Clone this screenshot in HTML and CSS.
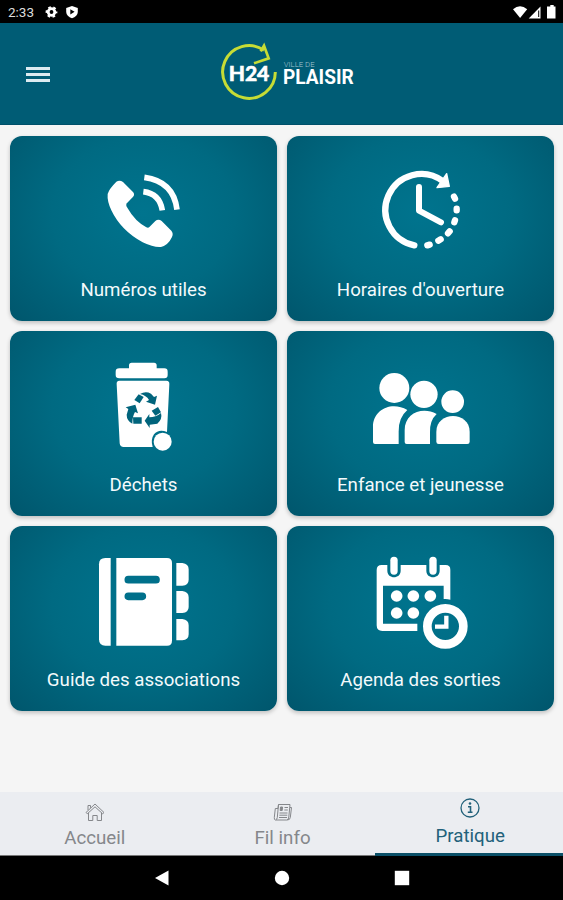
FILE: index.html
```html
<!DOCTYPE html>
<html lang="fr">
<head>
    <meta charset="UTF-8">
    <title>Ville de Plaisir</title>
    <link rel="stylesheet" href="styles.css">
</head>
<body>

    <div class="status-bar">
        <span class="clock">2:33</span>
        <svg class="status-left" width="34" height="14" viewBox="0 0 34 14" fill="#fff">
            <circle cx="6.5" cy="7" r="3.3" fill="none" stroke="#fff" stroke-width="2.8"/>
            <circle cx="6.5" cy="7" r="4.9" fill="none" stroke="#fff" stroke-width="2" stroke-dasharray="2.6 2.53" stroke-dashoffset="1.3"/>
            <path d="M27 1l5.8 2v4c0 3-2.400 5.200-5.800 6.300c-3.400-1.100-5.800-3.300-5.800-6.300V3z"/>
            <path d="M25.300 4.200v5.200l4.300-2.600z" fill="#000"/>
        </svg>
        <svg class="status-right" width="44" height="14" viewBox="0 0 44 14" fill="#fff">
            <path d="M0 4.200Q7-1.600 14.200 4.200L7.100 13z"/>
            <path d="M15.700 13.500L27.500 1.500v12z"/>
            <path d="M25.200 5.500h1v6.500h-1z" fill="#000"/>
            <path d="M35.500 1.500h1.800V0h3.400v1.500h1.800v12h-8.500v-12z"/>
        </svg>
    </div>

    <header class="header">
        <button class="menu-btn" type="button" aria-label="Menu">
            <span></span>
            <span></span>
            <span></span>
        </button>
        <svg class="logo" width="150" height="70" viewBox="0 0 450 210">
            <path d="M162 43A79 79 0 1 0 196 108" fill="none" stroke="#c6dc35" stroke-width="9"/>
            <path d="M132 82L176 67L162 29L152 46" fill="none" stroke="#c6dc35" stroke-width="8"/>
            <text class="logo-h24" x="56" y="134" textLength="122" lengthAdjust="spacingAndGlyphs">H24</text>
            <text class="logo-ville" x="221" y="93" textLength="93" lengthAdjust="spacingAndGlyphs">VILLE DE</text>
            <text class="logo-name" x="219" y="143" textLength="212" lengthAdjust="spacingAndGlyphs">PLAISIR</text>
        </svg>
    </header>

    <main class="grid">
        <a class="card">
            <svg class="card-icon" viewBox="283 91 300 300" fill="#fff">
                <path d="M350 156Q360 150 370 157L400 187Q407 195 399 203L380 222Q378 227 384 236Q406 275 440 293Q446 296 450 291L467 274Q476 266 486 274L515 303Q522 311 517 322Q506 346 484 352Q462 354 429 338Q364 303 335 242Q322 214 324 193Q328 178 350 156z"/>
                <path d="M434 143Q522 155 532 240M431 186Q480 192 488 242" fill="none" stroke="#fff" stroke-width="17"/>
            </svg>
            <span class="card-label">Numéros utiles</span>
        </a>
        <a class="card">
            <svg class="card-icon" viewBox="258 90 300 300" fill="none" stroke="#fff" stroke-linecap="round">
                <path d="M388 346A108 108 0 1 1 473 153" stroke-width="19"/>
                <path d="M485 131L493 169L456 173z" fill="#fff" stroke-width="4" stroke-linejoin="round"/>
                <path d="M402 171V242L468 277" stroke-width="18" stroke-linejoin="round"/>
                <path d="M507 200L510 206M515 236V241M510 271L508 277M494 304L489 310M467 328L460 332M434 344L427 346" stroke-width="19"/>
            </svg>
            <span class="card-label">Horaires d'ouverture</span>
        </a>
        <a class="card">
            <svg class="card-icon" viewBox="283 90 300 300" fill="#fff">
                <path d="M388 130V121Q388 113 396 113H463Q471 113 471 121V130H494Q504 130 504 140V150Q504 160 494 160H359Q348 160 348 150V140Q348 130 359 130z"/>
                <path d="M359 167H500Q510 167 509 178L502 321Q477 311 463 328Q452 344 459 366H372Q361 366 360 355L351 178Q350 167 359 167z"/>
                <circle cx="489" cy="350" r="27"/>
                <g fill="#00647c">
                    <path d="M421 207Q438 197 454 206L463 216L472 212L466 239L439 230L448 225Q440 211 421 207z"/>
                    <path d="M417 208L432 216L420 235L404 225z"/>
                    <path d="M378 247L407 239L415 265L406 261Q398 274 398 296Q381 287 381 269L386 252z"/>
                    <path d="M400 277H426V296H401z"/>
                    <path d="M435 287L449 267V277Q468 277 484 264Q489 282 473 296L450 299V309z"/>
                    <path d="M456 257L475 246L484 262L467 272z"/>
                </g>
            </svg>
            <span class="card-label">Déchets</span>
        </a>
        <a class="card">
            <svg class="card-icon" viewBox="258 90 300 300" fill="#fff">
                <circle cx="328" cy="189" r="45"/>
                <circle cx="417" cy="208" r="41"/>
                <circle cx="503" cy="230" r="34"/>
                <path d="M264 351V306C264 252 321 228 367 255Q340 278 341 320V357H270Q264 357 264 351z"/>
                <path d="M359 351V316C359 264 412 244 455 267Q434 286 435 322V357H365Q359 357 359 351z"/>
                <path d="M454 350V320C454 257 554 257 554 320V350Q554 357 547 357H461Q454 357 454 350z"/>
            </svg>
            <span class="card-label">Enfance et jeunesse</span>
        </a>
        <a class="card">
            <svg class="card-icon" viewBox="283 90 300 300" fill="#fff">
                <path d="M333 114V377H317Q298 377 298 358V133Q298 114 317 114z"/>
                <path d="M350 114H502Q517 114 517 129V362Q517 377 502 377H350z"/>
                <path d="M530 129H548Q567 131 567 148V179Q567 196 548 197H530zM530 213H548Q567 215 567 232V261Q567 278 548 279H530zM530 297H548Q567 299 567 316V343Q567 360 548 361H530z"/>
                <path d="M386 179H469M386 229H428" stroke="#00708b" stroke-width="23" stroke-linecap="round"/>
            </svg>
            <span class="card-label">Guide des associations</span>
        </a>
        <a class="card">
            <svg class="card-icon" viewBox="258 90 300 300" fill="#fff">
                <path fill-rule="evenodd" d="M290 135H307V152C307 178 347 178 347 152V135H424V152C424 178 464 178 464 152V135H482Q496 135 496 149V239Q486 236 476 237V197H294V311H397V333H292Q275 333 275 316V150Q275 135 290 135z"/>
                <rect x="316" y="110" width="22" height="54" rx="11"/>
                <rect x="433" y="110" width="22" height="54" rx="11"/>
                <circle cx="335" cy="228" r="17.500"/>
                <circle cx="385" cy="228" r="17.500"/>
                <circle cx="436" cy="228" r="17.500"/>
                <circle cx="335" cy="279" r="17.500"/>
                <circle cx="385" cy="279" r="17.500"/>
                <circle cx="481" cy="319" r="54" fill="none" stroke="#fff" stroke-width="26"/>
                <path d="M484 287V320H450" fill="none" stroke="#fff" stroke-width="13"/>
            </svg>
            <span class="card-label">Agenda des sorties</span>
        </a>
    </main>

    <nav class="tabs">
        <a class="tab">
            <svg width="20" height="20" viewBox="0 0 20 20" fill="none" stroke="currentColor">
                <path d="M1 10.500L10 2l9 8.500l-1.300 1.300L10 4.800l-7.700 7z"/>
                <path d="M3.500 11v7.500h4.300v-5h4.400v5h4.300V11M3 8V3.500h2.500v2.300"/>
            </svg>
            <span>Accueil</span>
        </a>
        <a class="tab">
            <svg width="20" height="20" viewBox="0 0 20 20" fill="none" stroke="currentColor">
                <path d="M5.500 2.500h11.500l-1.200 12.500q-.3 3-2 3H2.500q-1.500 0-1.200-2.500l1-9H5z"/>
                <path d="M5.500 2.500L4.300 15.500q-.3 2-1.500 2.300M17 5.500h1.500L17.300 15.500q-.3 2.500-3 2.500M11.500 5.500h3.500M11.300 8h3.500M6.500 11h8M6.300 13.200h8M6 15.500h8"/>
                <path d="M7.500 5h2l-.3 3.500h-2z" fill="currentColor"/>
            </svg>
            <span>Fil info</span>
        </a>
        <a class="tab active">
            <svg width="20" height="20" viewBox="0 0 20 20" fill="none" stroke="currentColor">
                <circle cx="10" cy="10" r="9" stroke-width="1.300"/>
                <path d="M8 8.700h2.500v5.500M7.800 14.300h4.700" stroke-width="1.600"/>
                <circle cx="10" cy="5.500" r="1.300" fill="currentColor" stroke="none"/>
            </svg>
            <span>Pratique</span>
        </a>
    </nav>

    <div class="system-nav">
        <svg width="16" height="16" viewBox="0 0 16 16"><path d="M1 8L14.500 .5v15z" fill="#fff"/></svg>
        <svg width="16" height="16" viewBox="0 0 16 16"><circle cx="8" cy="8" r="7.200" fill="#fff"/></svg>
        <svg width="16" height="16" viewBox="0 0 16 16"><rect x=".8" y=".8" width="14.400" height="14.400" fill="#fff"/></svg>
    </div>

</body>
</html>
```

FILE: styles.css
```css
* {
    box-sizing: border-box;
}

body {
    display: flex;
    flex-direction: column;
    height: 900px;
    margin: 0;
    font-family: Roboto, sans-serif;
    background-color: #f5f5f5;
    overflow: hidden;
}

.status-bar {
    display: flex;
    align-items: center;
    height: 23px;
    padding: 1px 6px 0 8px;
    background: #000;
    color: #ddd;
}

.clock {
    width: 37px;
    font-size: 13.5px;
}

.status-right {
    margin-left: auto;
}

.header {
    display: flex;
    align-items: center;
    height: 102px;
    padding-left: 26px;
    background: #005c75;
    border-bottom: 1px solid #00506a;
}

.menu-btn {
    display: flex;
    flex-direction: column;
    gap: 3.5px;
    width: 24px;
    padding: 0;
    margin-top: 2px;
    border: none;
    background: none;
}

.menu-btn span {
    height: 2.5px;
    background: #dcebf1;
}

.logo {
    margin-left: 160px;
    margin-top: -5px;
}

.logo text {
    fill: #fff;
    font-weight: bold;
}

.logo-h24 {
    font-family: Lato, sans-serif;
    font-size: 62px;
    stroke: #fff;
    stroke-width: 2px;
}

.logo .logo-ville {
    font-size: 21px;
    font-weight: 300;
    fill: #a5c5d0;
}

.logo-name {
    font-size: 60px;
}

.grid {
    display: grid;
    grid-template-columns: 267px 267px;
    grid-auto-rows: 184.5px;
    gap: 10.5px 10px;
    flex: 1;
    padding: 11px 10px 0;
}

.card {
    display: flex;
    flex-direction: column;
    align-items: center;
    padding-top: 24px;
    border-radius: 12px;
    background: radial-gradient(ellipse 76% 92% at 50% 42%, #00748e 0%, #006a82 45%, #005268 100%);
    box-shadow: 0 2px 4px rgba(0, 0, 0, 0.22);
}

.card-icon {
    width: 100px;
    height: 100px;
}

.card-label {
    margin-top: 17.5px;
    color: #f3fafc;
    font-size: 18.7px;
    line-height: 24px;
    white-space: nowrap;
}

.tabs {
    display: flex;
    height: 64px;
    background: #ebedf1;
}

.tab {
    display: flex;
    flex: 1;
    flex-direction: column;
    align-items: center;
    padding-top: 10px;
    padding-left: 2px;
    border-bottom: 1px solid #777;
    color: #85878b;
    font-size: 18.7px;
    line-height: 24px;
}

.tab span {
    margin-top: 4px;
}

.tab.active {
    padding-top: 6px;
    border-bottom: 3px solid #0b5068;
    color: #22617a;
}

.tab.active span {
    margin-top: 6px;
}

.system-nav {
    display: flex;
    justify-content: center;
    align-items: center;
    gap: 104px;
    height: 44px;
    background: #000;
}
```
